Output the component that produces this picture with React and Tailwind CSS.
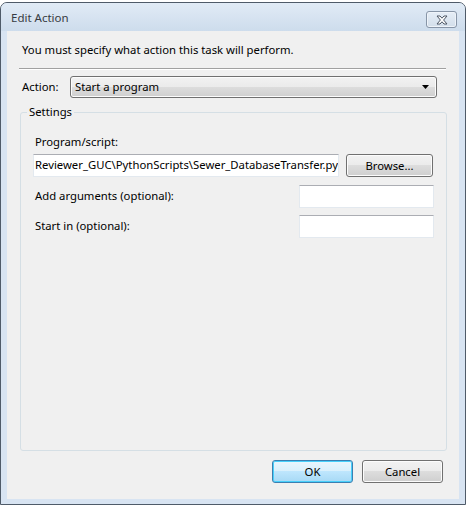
import React from "react";

const font = { fontFamily: '"Noto Sans", "Open Sans", sans-serif' };

function Win7Button({ children, primary, className = "w-[81px]" }) {
  return (
    <button
      className={
        "h-[23px] rounded-[3px] border text-[11.3px] text-black leading-none flex items-center justify-center " +
        className +
        " " +
        (primary
          ? "border-[#3c7fb1] shadow-[inset_0_0_0_1px_#48d0fb] bg-[linear-gradient(#eaf6fd_0%,#d9f0fc_49%,#bee6fd_50%,#a7d9f5_100%)]"
          : "border-[#707070] shadow-[inset_0_0_0_1px_#fcfcfc] bg-[linear-gradient(#f2f2f2_0%,#ebebeb_49%,#dddddd_50%,#cfcfcf_100%)]")
      }
    >
      {children}
    </button>
  );
}

function TextBox({ className, children }) {
  return (
    <div
      className={
        "h-[23px] bg-white border border-[#e3e9ef] border-t-[#abadb3] flex items-center overflow-hidden whitespace-nowrap text-[11.3px] text-black " +
        className
      }
    >
      {children}
    </div>
  );
}

export default function App() {
  return (
    <div className="w-[469px] h-[506px] bg-white overflow-hidden" style={font}>
      {/* window frame */}
      <div className="mt-[2px] w-[466px] h-[503px] border border-[#4f5b69] rounded-t-[7px] bg-[#d8e4f2] flex flex-col px-[6px] pb-[5px]">
        {/* title bar */}
        <div className="h-[28px] flex items-start justify-between -mx-[6px] pl-[10px] pr-[8px] rounded-t-[6px] bg-[linear-gradient(#e1ebf6,#cddcec)]">
          <span className="mt-[9px] text-[11.5px] leading-none text-[#363b42]">Edit Action</span>
          <div className="mt-[8px] w-[31px] h-[17px] rounded-[3px] border border-[#8795a7] bg-[linear-gradient(#e6eef7,#d2deea)] flex items-center justify-center shadow-[inset_0_0_0_1px_#eef3f9]">
            <svg width="14" height="10" viewBox="0 0 14 10">
              <path
                d="M2 1h3l2 2.2L9 1h3L8.6 5 12 9H9L7 6.8 5 9H2l3.4-4z"
                fill="#ffffff"
                stroke="#4c5664"
                strokeWidth="1"
                strokeLinejoin="round"
              />
            </svg>
          </div>
        </div>

        {/* client area */}
        <div className="flex-1 bg-[#f0f0f0] flex flex-col">
          <p className="mt-[11px] ml-[15px] text-[11.3px] leading-[16px] text-black">
            You must specify what action this task will perform.
          </p>
          <div className="mt-[10px] ml-[12px] mr-[13px] border-t border-[#a0a0a0] border-b border-b-white" />

          <div className="mt-[6px] flex items-center">
            <span className="ml-[15px] w-[48px] text-[11.3px] text-black">Action:</span>
            <div className="w-[367px] h-[22px] rounded-[3px] border border-[#707070] shadow-[inset_0_0_0_1px_#fcfcfc] bg-[linear-gradient(#f2f2f2_0%,#ebebeb_49%,#dddddd_50%,#cfcfcf_100%)] flex items-center justify-between pl-[4px] pr-[7px]">
              <span className="text-[11.3px] text-black">Start a program</span>
              <svg width="7" height="4" viewBox="0 0 7 4">
                <path d="M0 0h7L3.5 4z" fill="#000" />
              </svg>
            </div>
          </div>

          <fieldset className="mt-[6px] ml-[13px] mr-[13px] h-[347px] border border-[#d5dfe5] rounded-[3px] px-[13px] pb-[10px] flex flex-col">
            <legend className="-ml-[7px] px-[2px] text-[11.3px] leading-[16px] text-black">Settings</legend>
            <span className="mt-[14px] ml-[1px] text-[11.3px] leading-[16px] text-black">Program/script:</span>
            <div className="mt-[4px] flex items-center">
              <TextBox className="w-[306px] -ml-[1px] pl-[1px]">
                Reviewer_GUC\PythonScripts\Sewer_DatabaseTransfer.py
              </TextBox>
              <div className="ml-[7px]">
                <Win7Button className="w-[87px]">Browse...</Win7Button>
              </div>
            </div>
            <div className="mt-[8px] flex items-center justify-between">
              <span className="ml-[1px] text-[11.3px] text-black">Add arguments (optional):</span>
              <TextBox className="w-[135px] -mr-[1px]" />
            </div>
            <div className="mt-[7px] flex items-center justify-between">
              <span className="ml-[1px] text-[11.3px] text-black">Start in (optional):</span>
              <TextBox className="w-[135px] -mr-[1px]" />
            </div>
          </fieldset>

          <div className="mt-[9px] flex justify-end gap-[9px] mr-[16px]">
            <Win7Button primary>OK</Win7Button>
            <Win7Button>Cancel</Win7Button>
          </div>
        </div>
      </div>
    </div>
  );
}
